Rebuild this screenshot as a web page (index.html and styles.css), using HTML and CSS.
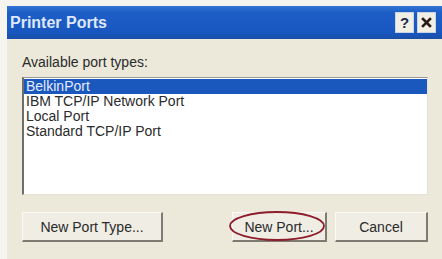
FILE: index.html
```html
<!DOCTYPE html>
<html>
<head>
<meta charset="utf-8">
<link rel="stylesheet" href="styles.css">
</head>
<body>
<div class="window">
  <div class="titlebar">
    <span class="title">Printer Ports</span>
    <div class="tbtns">
      <span class="tbtn help">?</span>
      <span class="tbtn close">
        <svg width="11" height="11" viewBox="0 0 11 11"><path d="M2 2L9 9M9 2L2 9" stroke="#2a1a1a" stroke-width="2.6" stroke-linecap="square"/></svg>
      </span>
    </div>
  </div>
  <div class="content">
    <div class="label">Available port types:</div>
    <div class="listbox">
      <div class="row sel">BelkinPort</div>
      <div class="row">IBM TCP/IP Network Port</div>
      <div class="row">Local Port</div>
      <div class="row">Standard TCP/IP Port</div>
    </div>
    <div class="buttons">
      <div class="btn b1">New Port Type...</div>
      <div class="btn b2">New Port...
        <svg class="ring" width="98" height="32" viewBox="0 0 98 32"><ellipse cx="49" cy="16" rx="47" ry="14" fill="none" stroke="#8e1c2c" stroke-width="1.8"/></svg>
      </div>
      <div class="btn b3">Cancel</div>
    </div>
  </div>
</div>
</body>
</html>
```
FILE: styles.css
```css
html, body {
  margin: 0;
  padding: 0;
  width: 442px;
  height: 259px;
  overflow: hidden;
  background: #f5f4ef;
  font-family: "Liberation Sans", "DejaVu Sans", sans-serif;
}
.window {
  margin: 6px 0 0 7px;
  height: 253px;
  background: #ece9da;
}
.titlebar {
  height: 33px;
  background: linear-gradient(#3273d4, #1d5ec6 20%, #1857bf 80%, #1a4fa8);
  display: flex;
  align-items: center;
  padding-left: 3px;
}
.title {
  color: #dfe8fb;
  font-weight: bold;
  font-size: 16px;
  flex: 1;
}
.tbtns {
  display: flex;
  gap: 3px;
  margin-right: 6px;
}
.tbtn {
  width: 19px;
  height: 21px;
  background: #f1eee4;
  border: 1px solid #c9d3e6;
  box-sizing: border-box;
  display: flex;
  align-items: center;
  justify-content: center;
}
.help {
  font-weight: bold;
  font-size: 15px;
  color: #1d2a48;
}
.content {
  padding: 15px 14px 0 15px;
}
.label {
  font-size: 14px;
  color: #2a2a2a;
  line-height: 16px;
}
.listbox {
  margin-top: 7px;
  height: 115px;
  background: #fff;
  border-top: 1px solid #9a9a94;
  border-left: 2px solid #6f6f6a;
  border-right: 1px solid #e3e1d6;
  border-bottom: 1px solid #e3e1d6;
  padding-top: 1px;
}
.row {
  height: 15px;
  line-height: 15px;
  font-size: 14px;
  color: #2b2b2b;
  padding-left: 2px;
}
.row.sel {
  background: #1a58bd;
  color: #e4ebff;
}
.buttons {
  display: flex;
  margin-top: 17px;
}
.btn {
  position: relative;
  height: 30px;
  box-sizing: border-box;
  background: #efede4;
  border-top: 1px solid #fbfaf6;
  border-left: 1px solid #fbfaf6;
  border-right: 2px solid #7d7b72;
  border-bottom: 2px solid #7d7b72;
  display: flex;
  align-items: center;
  justify-content: center;
  font-size: 14px;
  color: #2a2a2a;
}
.b1 { width: 141px; }
.b2 { width: 95px; margin-left: auto; }
.b3 { width: 93px; margin-left: 8px; }
.ring {
  position: absolute;
  left: -5px;
  top: -3px;
}
```
